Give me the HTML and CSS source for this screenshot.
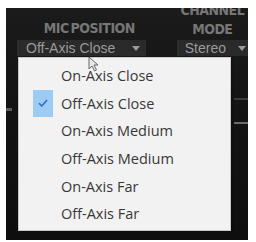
FILE: index.html
```html
<!DOCTYPE html>
<html>
<head>
<meta charset="utf-8">
<link rel="stylesheet" href="styles.css">
</head>
<body>
<div class="panel">
  <div class="labels">
    <div class="label mic">MIC POSITION</div>
    <div class="label chan">CHANNEL<br>MODE</div>
  </div>
  <div class="controls">
    <div class="select mic-sel"><span>Off-Axis Close</span><span class="arrow"></span></div>
    <div class="select chan-sel"><span>Stereo</span><span class="arrow"></span></div>
  </div>
  <div class="edge-l"></div>
  <div class="edge-r"></div>
  <ul class="menu">
    <li class="item">On-Axis Close</li>
    <li class="item checked"><span class="check"><svg width="10" height="8" viewBox="0 0 10 8"><path d="M1 4.2 L3.8 7 L9 1" fill="none" stroke="#2f6fc0" stroke-width="1.6"/></svg></span>Off-Axis Close</li>
    <li class="item">On-Axis Medium</li>
    <li class="item">Off-Axis Medium</li>
    <li class="item">On-Axis Far</li>
    <li class="item">Off-Axis Far</li>
  </ul>
  <svg class="cursor" width="12" height="16" viewBox="0 0 12 16"><path d="M1 1 L1 13 L4 10 L6.5 15 L8.5 14 L6 9 L10 9 Z" fill="#e8e8e8" stroke="#666" stroke-width="1"/></svg>
</div>
</body>
</html>
```
FILE: styles.css
```css
html, body { margin: 0; padding: 0; background: #fff; }
body { width: 256px; height: 242px; overflow: hidden; }
.panel {
  position: relative;
  margin: 8px 0 0 6px;
  width: 242px;
  height: 232px;
  background: linear-gradient(180deg, #1b1b1b 0%, #141414 40%, #0e0e0e 100%);
  overflow: hidden;
}
.labels { display: flex; height: 32px; }
.label {
  font-family: "Liberation Sans Narrow", "DejaVu Sans Condensed", sans-serif;
  font-weight: bold;
  color: #767676;
  font-size: 14px;
  letter-spacing: -0.5px;
  word-spacing: -2px;
  text-align: center;
}
.mic { width: 168px; padding-top: 13px; line-height: 15px; }
.chan { margin-left: 4px; width: 72px; margin-top: -7px; line-height: 19px; }
.controls { display: flex; height: 16px; }
.select {
  display: flex;
  align-items: center;
  justify-content: space-between;
  background: #2a2a2a;
  color: #9a9a9a;
  font-family: "Liberation Sans", sans-serif;
  font-size: 14px;
  height: 16px;
  box-sizing: border-box;
}
.mic-sel { margin-left: 11px; width: 130px; padding: 0 6px 0 9px; }
.chan-sel { margin-left: 31px; width: 72px; padding: 0 2px 0 8px; }
.arrow {
  width: 0; height: 0;
  border-left: 4px solid transparent;
  border-right: 4px solid transparent;
  border-top: 5px solid #9a9a9a;
}
.edge-l {
  position: absolute; left: 0; top: 100px; width: 6px; height: 3px;
  background: #5a5a5a;
}
.edge-r {
  position: absolute; right: 0; top: 90px; width: 14px; height: 22px;
  border-top: 2px solid #3a3a3a; border-bottom: 2px solid #6a6a6a;
}
.menu {
  position: absolute;
  left: 12px;
  top: 49px;
  width: 213px;
  height: 174px;
  margin: 0;
  padding: 4px 0 0;
  box-sizing: border-box;
  list-style: none;
  background: #f2f2f2;
  border: 1px solid #c8c8c8;
  box-shadow: 1px 1px 2px rgba(0,0,0,0.3);
}
.item {
  height: 27.6px;
  display: flex;
  align-items: center;
  padding-left: 42px;
  font-family: "Open Sans", "Noto Sans", sans-serif;
  font-size: 14.5px;
  color: #383838;
  position: relative;
}
.check {
  position: absolute;
  left: 14px;
  top: 0;
  width: 20px;
  height: 100%;
  background: #9ccbf4;
  display: flex;
  align-items: center;
  justify-content: center;
}
.cursor { position: absolute; left: 82px; top: 48px; }
```
